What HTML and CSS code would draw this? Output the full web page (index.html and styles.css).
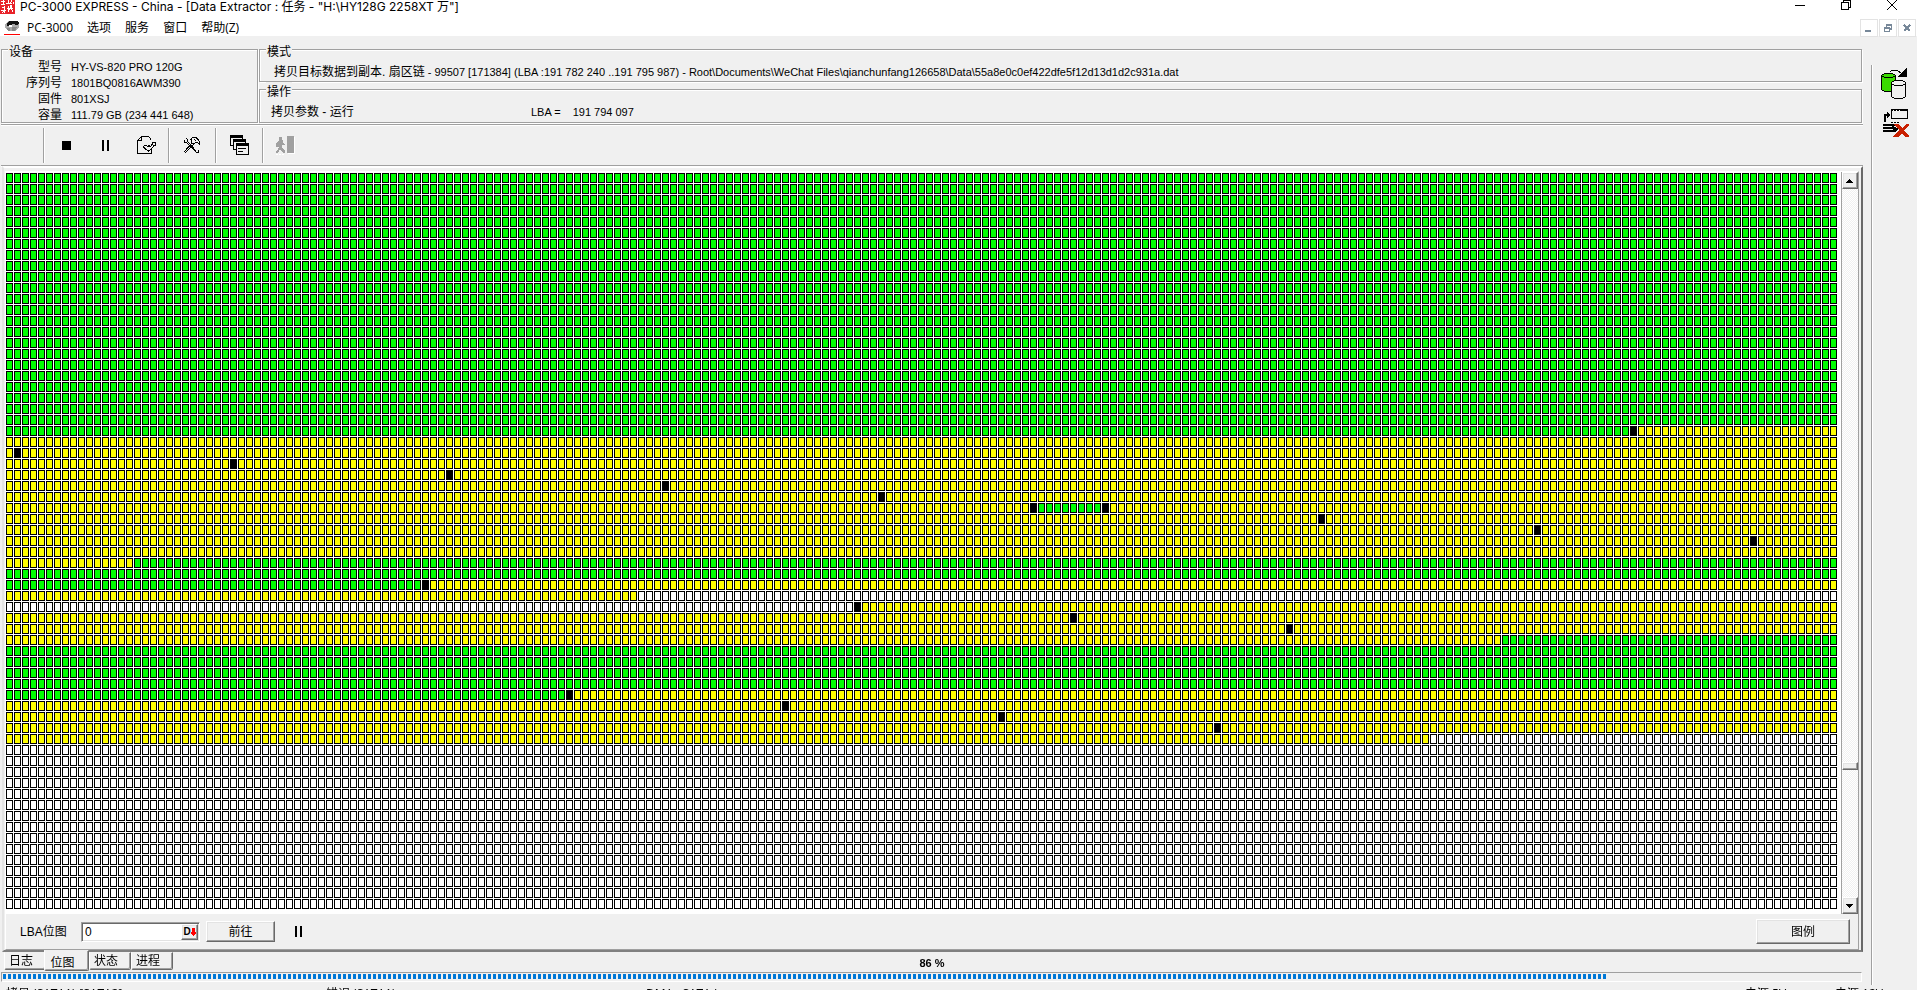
FILE: index.html
```
<!DOCTYPE html>
<html lang="zh-CN">
<head>
    <meta charset="UTF-8">
    <meta name="viewport" content="width=device-width, initial-scale=1.0">
    <title>PC-3000 EXPRESS - Data Extractor</title>
    <link rel="stylesheet" href="styles.css">
</head>
<body>
<div class="window">
    <header class="titlebar">
        <svg class="app-icon" width="15" height="14" viewBox="0 0 15 14">
            <rect width="15" height="14" fill="#e8232a"/>
            <path d="M1 1h4M3 0v5M1 5l4-1M8 0v3M6 3h6M12 0l-2 4M13 2v2M2 7l3 1M1 10h5M4 6v7M2 13l2-2M8 6v6M7 8h6M10 5l3 7M12 5l-4 7" stroke="#fff" fill="none"/>
        </svg>
        <h1 class="title">PC-3000 EXPRESS - China - [Data Extractor : 任务 - "H:\HY128G 2258XT 万"]</h1>
        <div class="win-controls">
            <button class="win-btn" aria-label="最小化"><svg width="12" height="12" viewBox="0 0 12 12"><path d="M1 5.500h10" stroke="#000"/></svg></button>
            <button class="win-btn" aria-label="还原"><svg width="12" height="12" viewBox="0 0 12 12"><path d="M1.500 2.500h7v7h-7zM3.500 2V0.500h7v7H9" fill="none" stroke="#000"/></svg></button>
            <button class="win-btn" aria-label="关闭"><svg width="12" height="12" viewBox="0 0 12 12"><path d="M1 0l10 10M11 0L1 10" stroke="#000"/></svg></button>
        </div>
    </header>

    <nav class="menubar">
        <svg class="menu-icon" width="16" height="16" viewBox="0 0 16 16">
            <path d="M1 5l3-3h8l3 2v5l-4 3H5L1 9z" fill="#aaa"/>
            <path d="M3 4l2-2h8l2 2-2 2-4-1-3 2H3z" fill="#111"/>
            <path d="M3 9h3v3H4zM8 8h5l-2 4H8z" fill="#888"/>
            <path d="M5 6h3v2H5z" fill="#fff"/>
            <path d="M0 15.500h16" stroke="#f00"/>
        </svg>
        <button class="menu-item">PC-3000</button>
        <button class="menu-item">选项</button>
        <button class="menu-item">服务</button>
        <button class="menu-item">窗口</button>
        <button class="menu-item">帮助(Z)</button>
        <div class="mdi-controls">
            <button class="mdi-btn" aria-label="最小化窗口"><svg width="10" height="10" viewBox="0 0 10 10"><path d="M1 8h6" stroke="#778899" stroke-width="2"/></svg></button>
            <button class="mdi-btn" aria-label="还原窗口"><svg width="10" height="10" viewBox="0 0 10 10"><path d="M1.500 5v3.500h5V5zM1 5h6M3.500 3.500V2h5v4H7M3 2h6" fill="none" stroke="#778899" stroke-width="1.500"/></svg></button>
            <button class="mdi-btn" aria-label="关闭窗口"><svg width="10" height="10" viewBox="0 0 10 10"><path d="M2 2l6 6M8 2L2 8" stroke="#778899" stroke-width="2.500"/></svg></button>
        </div>
    </nav>

    <div class="workspace">
        <main class="main">
            <section class="info">
                <fieldset class="group device">
                    <legend>设备</legend>
                    <dl class="device-list">
                        <dt>型号</dt><dd>HY-VS-820 PRO 120G</dd>
                        <dt>序列号</dt><dd>1801BQ0816AWM390</dd>
                        <dt>固件</dt><dd>801XSJ</dd>
                        <dt>容量</dt><dd>111.79 GB (234 441 648)</dd>
                    </dl>
                </fieldset>
                <div class="info-right">
                    <fieldset class="group mode">
                        <legend>模式</legend>
                        <p class="mode-text"><span class="cn">拷贝目标数据到副本. 扇区链</span> - 99507 [171384] (LBA :191 782 240 ..191 795 987) - Root\Documents\WeChat Files\qianchunfang126658\Data\55a8e0c0ef422dfe5f12d13d1d2c931a.dat</p>
                    </fieldset>
                    <fieldset class="group operation">
                        <legend>操作</legend>
                        <div class="operation-row">
                            <span class="cn operation-name">拷贝参数 - 运行</span>
                            <span>LBA =</span>
                            <span>191 794 097</span>
                        </div>
                    </fieldset>
                </div>
            </section>

            <div class="toolbar">
                <div class="tool-group">
                    <button class="tool" aria-label="停止"><svg width="22" height="22" viewBox="0 0 22 22"><path d="M6 7h9v9H6z"/></svg></button>
                    <button class="tool" aria-label="暂停"><svg width="22" height="22" viewBox="0 0 22 22"><path d="M7 6h2v11H7zM12 6h2v11h-2z"/></svg></button>
                    <button class="tool" aria-label="任务参数">
                        <svg width="22" height="22" viewBox="0 0 22 22" fill="none" stroke="#000">
                            <path d="M16.500 6V4.500l-2-2h-7l-4 4v13h14V16M7.500 3v3.500H4"/>
                            <path d="M10 12l2-1 2 2 3-1 2-3-1-1h3.500v3l-2 1-2 3-3 2-3-2-2-2zM14 11l2 1"/>
                        </svg>
                    </button>
                </div>
                <div class="tool-group">
                    <button class="tool" aria-label="工具">
                        <svg width="22" height="22" viewBox="0 0 22 22" fill="none" stroke="#000">
                            <path d="M3 6v2h3l1-2-2-2M7 8l8 9M6 9l9 9M15 18h2v-2"/>
                            <path d="M4 17l7-8M5 18l8-8M3 17l2 2"/>
                            <path d="M9 6l3-3h3l3 4v3l-2-2-2 1-2 1-2-2 1-2-2-1M13 5l2 2"/>
                        </svg>
                    </button>
                </div>
                <div class="tool-group">
                    <button class="tool" aria-label="窗口列表">
                        <svg width="22" height="22" viewBox="0 0 22 22" fill="#f0f0f0" stroke="#000">
                            <path d="M2.500 1.500h12v10h-12z"/><path d="M2 2.500h13" stroke-width="2"/>
                            <path d="M5.500 5.500h12v10h-12z"/><path d="M5 6.500h13" stroke-width="2"/>
                            <path d="M8.500 9.500h12v11h-12z"/><path d="M8 10.500h13" stroke-width="2"/>
                            <path d="M10 14.500h8M10 17.500h5"/>
                        </svg>
                    </button>
                </div>
                <div class="tool-group">
                    <button class="tool" aria-label="退出" disabled>
                        <svg width="22" height="22" viewBox="0 0 22 22">
                            <path d="M13 3h7v17h-7z" fill="#fff"/><path d="M12 2h7v17h-7z" fill="#a0a0a0"/>
                            <path d="M4 3h3v3h1v3l2 1v1H7v3l3 3v2H8l-3-4-2 4H1v-2l2-1 1-4-1 1H1V9l3-2z" fill="#a0a0a0"/>
                            <path d="M1 20.500h9" stroke="#fff" stroke-dasharray="2 1"/>
                        </svg>
                    </button>
                </div>
            </div>

            <section class="panel">
                <div class="panel-inner">
                    <div class="map-row">
                        <div class="map" id="map"><canvas id="map-canvas"></canvas></div>
                        <div class="scrollbar">
                            <button class="scroll-btn" aria-label="向上滚动"><svg width="8" height="4" viewBox="0 0 8 4"><path d="M0 4h7L4 0H3z"/></svg></button>
                            <div class="scroll-track"><div class="scroll-thumb"></div></div>
                            <button class="scroll-btn" aria-label="向下滚动"><svg width="8" height="4" viewBox="0 0 8 4"><path d="M0 0h7L4 4H3z"/></svg></button>
                        </div>
                    </div>
                    <div class="map-footer">
                        <label for="lba">LBA位图</label>
                        <div class="lba-field">
                            <input id="lba" type="text" value="0">
                            <button class="dec-btn" aria-label="十进制"><b>D</b><svg width="5" height="8" viewBox="0 0 5 8"><path d="M1 0h3v4h1v1L3 8H2L0 5V4h1z" fill="#f00"/></svg></button>
                        </div>
                        <button class="push go">前往</button>
                        <button class="pause" aria-label="暂停"><svg width="8" height="11" viewBox="0 0 8 11"><path d="M0 0h2v11H0zM5 0h2v11H5z"/></svg></button>
                        <button class="push legend-btn">图例</button>
                    </div>
                </div>
            </section>

            <div class="tab-row">
                <div class="tabs">
                    <button class="tab">日志</button>
                    <button class="tab active">位图</button>
                    <button class="tab">状态</button>
                    <button class="tab">进程</button>
                </div>
                <div class="percent">86 %</div>
            </div>
            <div class="progress" role="progressbar" aria-label="进度" aria-valuenow="86"><div class="progress-bar" style="width: 86.3%"></div></div>
        </main>

        <aside class="sidebar">
            <button class="side-btn" aria-label="复制驱动器">
                <svg width="30" height="32" viewBox="0 0 30 32" fill="none" stroke="#000">
                    <path d="M2.500 7.500v14l3 2h8l3-2v-14l-3-2h-8z" fill="#3adb00"/>
                    <path d="M2.500 7.500l3 2h8l3-2"/>
                    <path d="M12.500 14.500v14l3 2h8l3-2v-14l-3-2h-8z" fill="#f0f0f0"/>
                    <path d="M12.500 15.500l3 2h8l3-2"/>
                    <path d="M11 4l2-2h5l4 3"/>
                    <path d="M27 1v7h-7z" fill="#000"/>
                </svg>
            </button>
            <button class="side-btn" aria-label="删除任务">
                <svg width="30" height="30" viewBox="0 0 30 30" fill="none" stroke="#000">
                    <path d="M12.500 1.500h16v9h-16z"/><path d="M12 2h17" stroke-width="2"/>
                    <path d="M14 2.500h1M17 2.500h1M20 2.500h1" stroke="#fff"/>
                    <path d="M6 14V7h4" stroke-width="2"/><path d="M8 4l3 3-3 3z" fill="#000"/>
                    <path d="M4 17h14M4 20h13M4 23h11" stroke-width="2"/><path d="M12 14.500h8" stroke-dasharray="2 1"/>
                    <path d="M13 18l6 3-3 3z" fill="#000"/>
                    <path d="M15 16h5l3 4 4-4h4l-6 6 6 7h-5l-3-4-4 4h-5l6-7z" fill="#c82000" stroke="none"/>
                </svg>
            </button>
        </aside>
    </div>

    <footer class="statusbar">
        <span>拷贝 (SATA1)-[SATA2]</span>
        <span>错误 (SATA1)</span>
        <span>DMA &nbsp; SATA I</span>
        <span class="power">电源 5V</span>
        <span class="power">电源 12V</span>
    </footer>
</div>
<script src="map.js"></script>
</body>
</html>
```
FILE: styles.css
```
* {
    box-sizing: border-box;
}

body {
    margin: 0;
    height: 100vh;
    overflow: hidden;
    background: #f0f0f0;
    color: #000;
    font-family: "Liberation Sans", "Noto Sans CJK SC", sans-serif;
    font-size: 11px;
    line-height: 16px;
}

button {
    margin: 0;
    padding: 0;
    border: none;
    background: none;
    color: inherit;
    font: inherit;
}

svg {
    display: block;
    shape-rendering: crispEdges;
}

.window {
    display: flex;
    flex-direction: column;
    height: calc(100vh + 14px);
}

.cn {
    font-size: 12px;
}

/* title and menu */
.titlebar,
.menubar {
    display: flex;
    flex: none;
    background: #fff;
    font-family: Inter, "Noto Sans CJK SC", sans-serif;
    font-size: 12px;
}

.titlebar {
    height: 17px;
}

.title {
    margin: 0 0 0 5px;
    font-size: 12px;
    font-weight: normal;
    line-height: 14px;
}

.win-controls {
    display: flex;
    align-items: flex-start;
    margin-left: auto;
    padding-right: 2px;
}

.win-btn {
    display: flex;
    justify-content: center;
    width: 46px;
}

.menubar {
    height: 19px;
    padding-left: 4px;
    font-family: "Open Sans", "Noto Sans CJK SC", sans-serif;
}

.menu-icon {
    margin-top: 2px;
}

.menu-item {
    margin: 0 7px;
    line-height: 22px;
}

.mdi-controls {
    display: flex;
    gap: 1px;
    margin-left: auto;
    padding: 2px 1px 0 0;
}

.mdi-btn {
    display: flex;
    align-items: center;
    justify-content: center;
    width: 18px;
    height: 18px;
    border: 1px solid #e3e3e3;
}

.workspace {
    display: flex;
    flex: 1;
    min-height: 0;
}

.main {
    display: flex;
    flex-direction: column;
    flex: 1;
    min-width: 0;
    padding: 6px 0 3px 1px;
}

/* device info */
.info {
    display: flex;
    gap: 1px;
    flex: none;
    height: 82px;
}

.info-right {
    flex: 1;
    min-width: 0;
}

.group {
    margin: 0;
    min-width: 0;
    padding: 0;
    border: 1px solid #a0a0a0;
    box-shadow: 1px 1px #fff, inset 1px 1px #fff;
}

.group legend {
    margin-left: 6px;
    padding: 5px 1px 0;
    background: #f0f0f0;
    font-size: 12px;
    line-height: 10px;
}

.device {
    width: 257px;
    height: 81px;
}

.device-list {
    display: grid;
    grid-template-columns: 60px 1fr;
    column-gap: 9px;
    margin: 0;
    padding-top: 2px;
}

.device-list dt {
    font-size: 12px;
    text-align: right;
}

.device-list dd {
    margin: 0;
}

.mode {
    height: 40px;
    margin-right: 1px;
}

.operation {
    height: 41px;
    margin-right: 1px;
}

.mode-text {
    margin: 0;
    padding: 7px 0 0 14px;
    white-space: nowrap;
}

.operation-row {
    display: flex;
    gap: 12px;
    padding: 7px 0 0 11px;
}

.operation-name {
    width: 248px;
}

/* toolbar */
.toolbar {
    display: flex;
    flex: none;
    height: 42px;
    padding: 3px 0 2px 42px;
    border-top: 1px solid #a0a0a0;
    border-bottom: 1px solid #a0a0a0;
    box-shadow: inset 0 1px #fff, 0 1px #fff;
}

.tool-group {
    display: flex;
    padding: 0 4px 2px 3px;
    border-left: 1px solid #a0a0a0;
    box-shadow: inset 1px 0 #fff;
}

.tool {
    display: flex;
    align-items: center;
    justify-content: center;
    width: 39px;
}

/* bitmap panel */
.panel {
    flex: 1;
    min-height: 0;
    margin-left: 1px;
    padding: 3px 2px 0 1px;
    border: 2px solid;
    border-color: #fff #696969 #808080 #e3e3e3;
}

.panel-inner {
    display: flex;
    flex-direction: column;
    height: 100%;
    border: 1px solid;
    border-color: #fff #a0a0a0 #a0a0a0 #fff;
}

.map-row {
    display: flex;
    flex: 1;
    min-height: 0;
    background: #fff;
}

.map {
    flex: 1;
    min-width: 0;
    margin-top: 1px;
    overflow: hidden;
}

.map canvas {
    display: block;
}

.scrollbar {
    display: flex;
    flex-direction: column;
    width: 17px;
    border-left: 1px solid #a0a0a0;
}

.scroll-btn,
.scroll-thumb,
.dec-btn,
.push {
    background: #f0f0f0;
    border: 1px solid;
    border-color: #fff #696969 #696969 #fff;
    box-shadow: inset -1px -1px #a0a0a0, inset 1px 1px #e3e3e3;
}

.scroll-btn {
    display: flex;
    align-items: center;
    justify-content: center;
    height: 17px;
}

.scroll-track {
    display: flex;
    flex: 1;
    align-items: flex-end;
    background: repeating-conic-gradient(#fff 0 25%, #f0f0f0 0 50%) 0 0 / 2px 2px;
}

.scroll-thumb {
    width: 100%;
    height: 8px;
    margin-bottom: 127px;
}

.map-footer {
    display: flex;
    align-items: center;
    flex: none;
    height: 35px;
    padding: 0 8px 0 14px;
    font-size: 12px;
}

.map-footer label {
    width: 61px;
}

.lba-field {
    display: flex;
    width: 119px;
    height: 20px;
    margin-right: 6px;
    padding: 1px;
    background: #fff;
    border: 1px solid;
    border-color: #a0a0a0 #fff #fff #a0a0a0;
    box-shadow: inset 1px 1px #696969, inset -1px -1px #e3e3e3;
}

.lba-field input {
    flex: 1;
    min-width: 0;
    margin: 0;
    padding: 0 0 0 2px;
    border: none;
    outline: none;
    background: none;
    font: inherit;
}

.dec-btn {
    display: flex;
    align-items: center;
    justify-content: center;
    width: 17px;
    font-size: 10px;
}

.go {
    width: 69px;
    height: 21px;
}

.pause {
    margin-left: 20px;
}

.legend-btn {
    width: 94px;
    height: 25px;
    margin-left: auto;
}

/* tabs and progress */
.tab-row {
    display: grid;
    grid-template-columns: 1fr auto 1fr;
    flex: none;
    height: 20px;
}

.tabs {
    display: flex;
    align-items: flex-start;
    padding-left: 3px;
}

.tab {
    width: 42px;
    height: 18px;
    padding-right: 8px;
    background: #f0f0f0;
    border: 1px solid;
    border-color: transparent #696969 #696969 #fff;
    border-radius: 0 0 2px 2px;
    box-shadow: inset -1px -1px #a0a0a0;
    font-size: 12px;
}

.tab.active {
    position: relative;
    width: 45px;
    height: 21px;
    margin: -2px 0 0 -2px;
    border-top-color: #f0f0f0;
    padding-top: 4px;
}

.percent {
    font-weight: bold;
    line-height: 22px;
}

.progress {
    flex: none;
    height: 10px;
    margin-right: 1px;
    padding: 1px;
    border: 1px solid;
    border-color: #a0a0a0 #fff #fff #a0a0a0;
}

.progress-bar {
    height: 5px;
    background: repeating-linear-gradient(90deg, #0078d7 0 3px, #f0f0f0 3px 5px);
}

/* right side */
.sidebar {
    flex: none;
    width: 46px;
    margin: 29px 0 0 8px;
    padding: 3px 0 0 7px;
    border-left: 1px solid #a0a0a0;
    box-shadow: inset 1px 0 #fff;
}

.side-btn {
    display: block;
    margin-bottom: 8px;
}

.statusbar {
    display: flex;
    flex: none;
    height: 19px;
    padding: 0 32px 0 6px;
    font-family: "Open Sans", "Noto Sans CJK SC", sans-serif;
    font-size: 12px;
    line-height: 17px;
}

.statusbar span {
    width: 320px;
}

.statusbar .power {
    width: 90px;
}

.statusbar .power:nth-child(4) {
    margin-left: auto;
}

.statusbar .power:last-child {
    width: 50px;
    white-space: nowrap;
}
```
FILE: map.js
```
const CELL_W = 8;
const CELL_H = 11;
const COLORS = { g: '#00ff00', y: '#ffff00', w: '#ffffff', k: '#000000' };

// sector runs in reading order: state + number of blocks
const runs = [
    'g5470', 'k1', 'y255', 'k1', 'y255', 'k1', 'y255', 'k1', 'y255', 'k1',
    'y255', 'k1', 'y247', 'k1', 'g8', 'k1', 'y255', 'k1', 'y255', 'k1', 'y255',
    'k1', 'y255', 'g494', 'k1', 'y255', 'w256', 'k1', 'y255', 'k1', 'y255',
    'k1', 'y255', 'g1028', 'k1', 'y255', 'k1', 'y255', 'k1', 'y255', 'k1', 'y255'
];

function drawMap() {
    const box = document.getElementById('map');
    const canvas = document.getElementById('map-canvas');
    const cols = Math.floor(box.clientWidth / CELL_W);
    const rows = Math.floor(box.clientHeight / CELL_H);
    canvas.width = cols * CELL_W;
    canvas.height = rows * CELL_H;
    const ctx = canvas.getContext('2d');

    const cells = [];
    runs.forEach(run => {
        for (let n = parseInt(run.slice(1)); n > 0; n--) cells.push(run[0]);
    });

    for (let i = 0; i < cols * rows; i++) {
        const x = (i % cols) * CELL_W;
        const y = Math.floor(i / cols) * CELL_H;
        ctx.fillStyle = '#000000';
        ctx.fillRect(x, y, CELL_W - 1, CELL_H - 1);
        ctx.fillStyle = COLORS[cells[i] || 'w'];
        ctx.fillRect(x + 1, y + 1, CELL_W - 3, CELL_H - 3);
    }
}

drawMap();
window.addEventListener('resize', drawMap);
```
